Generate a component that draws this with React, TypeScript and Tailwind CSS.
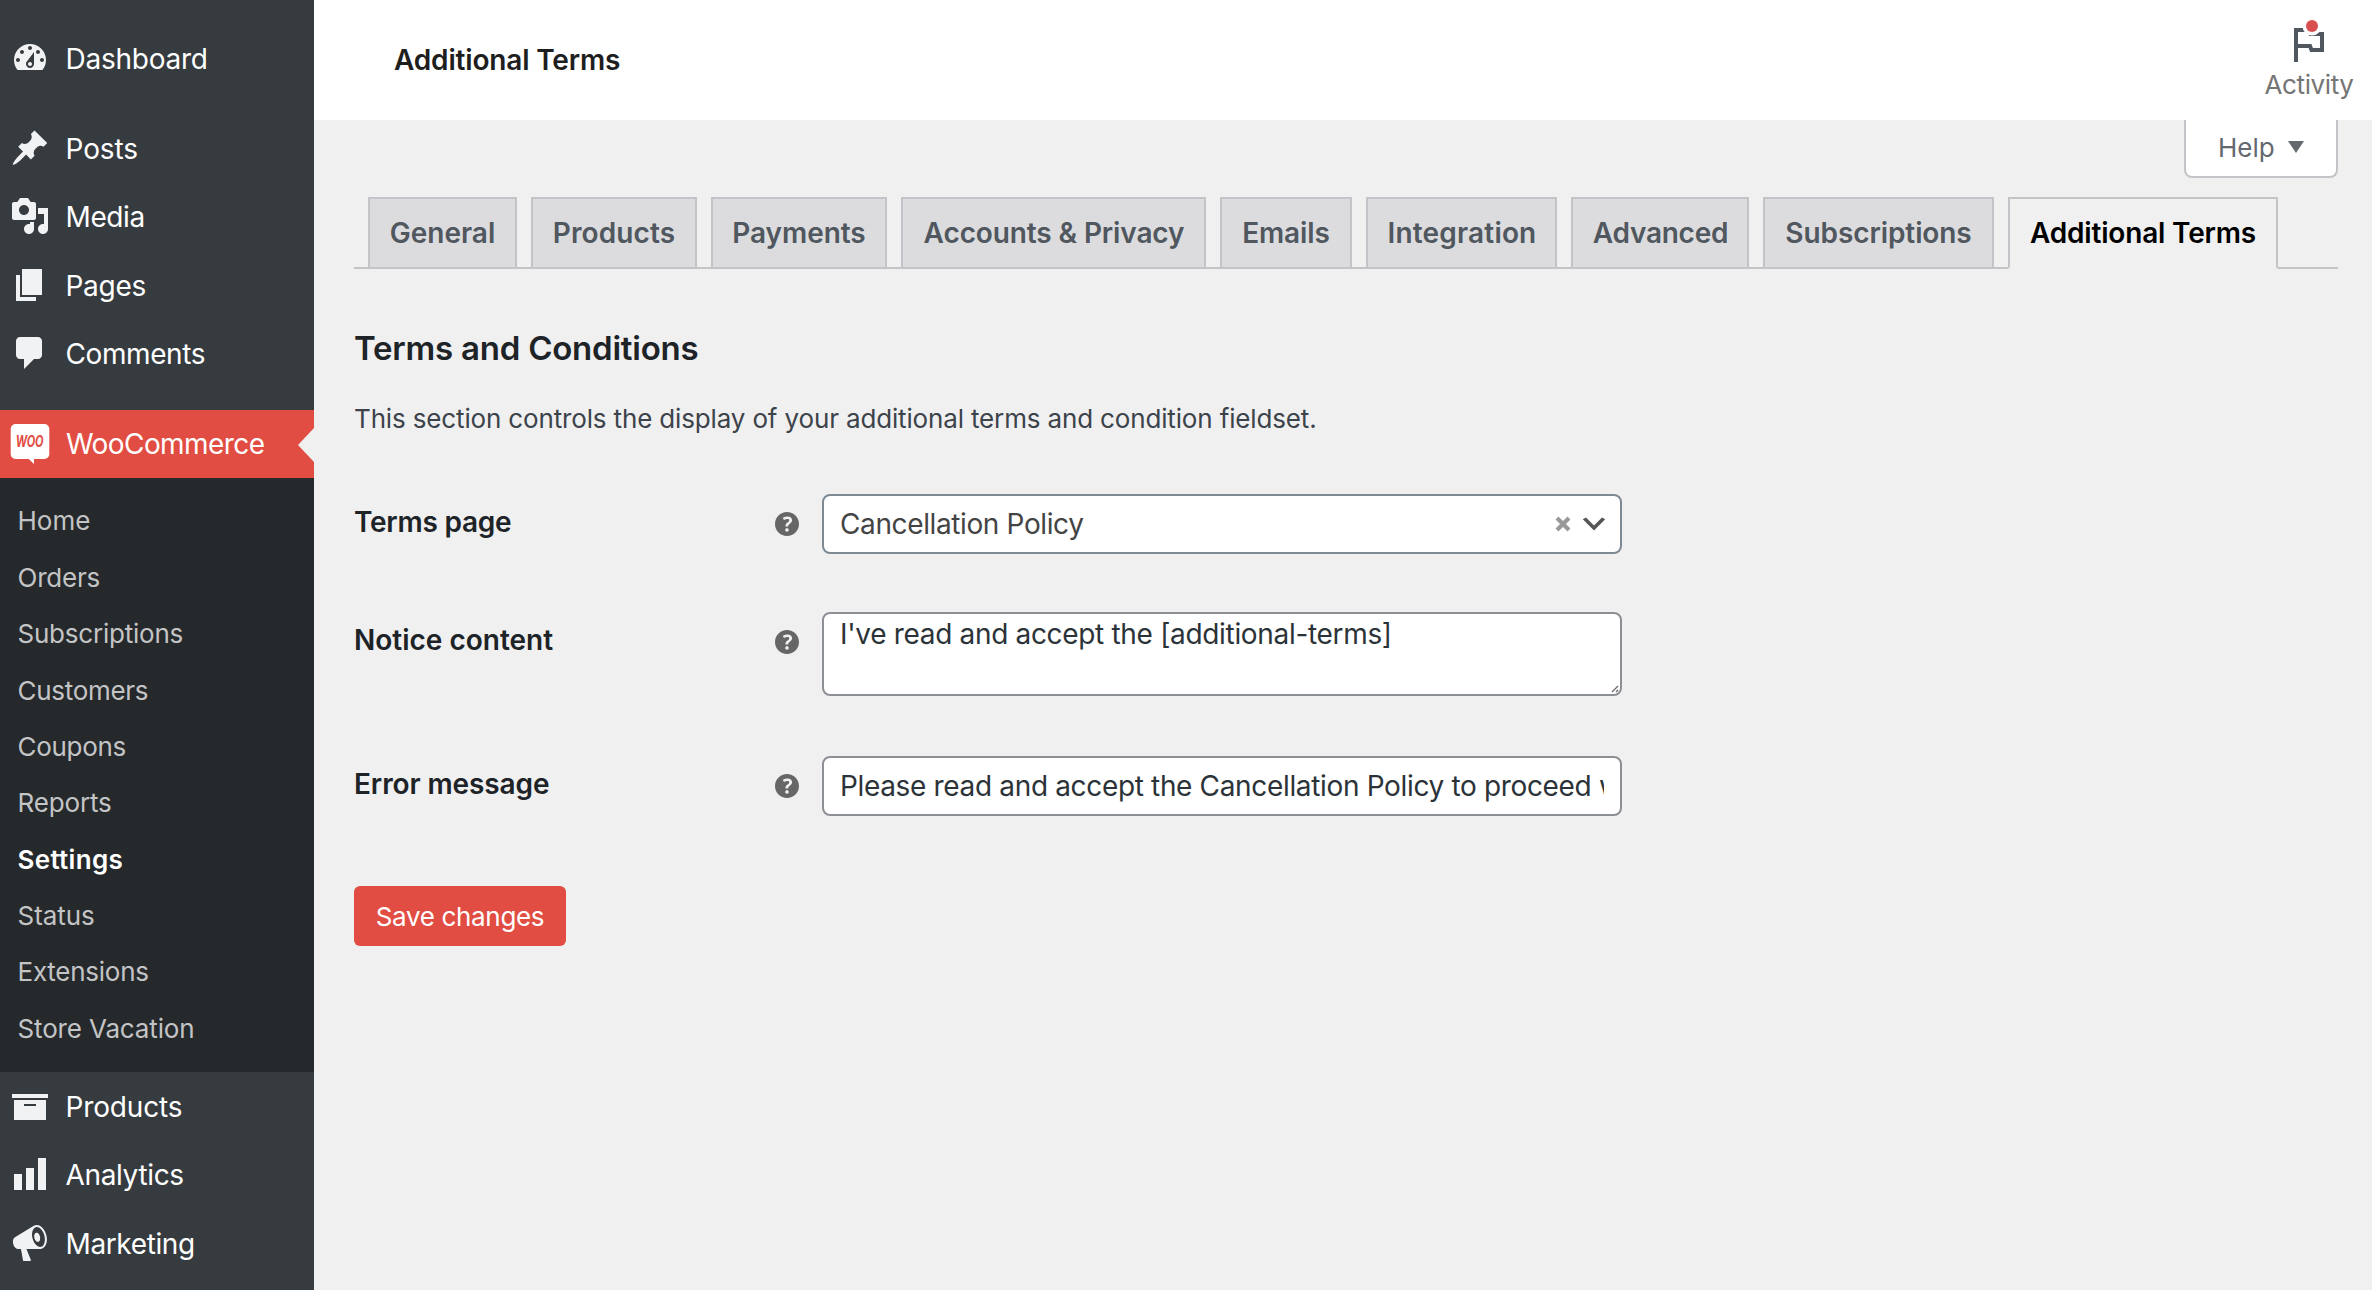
import type { ReactNode } from "react";

const icons: Record<string, string> = {
  dashboard:
    "M3.76 16h12.48c1.1-1.37 1.76-3.11 1.76-5 0-4.42-3.58-8-8-8s-8 3.58-8 8c0 1.89.66 3.63 1.76 5zM10 4c.55 0 1 .45 1 1s-.45 1-1 1-1-.45-1-1 .45-1 1-1zM6 6c.55 0 1 .45 1 1s-.45 1-1 1-1-.45-1-1 .45-1 1-1zm8 0c.55 0 1 .45 1 1s-.45 1-1 1-1-.45-1-1 .45-1 1-1zm-5.37 5.55L12 7v6c0 1.1-.9 2-2 2s-2-.9-2-2c0-.57.24-1.08.63-1.45zM4 10c.55 0 1 .45 1 1s-.45 1-1 1-1-.45-1-1 .45-1 1-1zm12 0c.55 0 1 .45 1 1s-.45 1-1 1-1-.45-1-1 .45-1 1-1zm-5 3c0-.55-.45-1-1-1s-1 .45-1 1 .45 1 1 1 1-.45 1-1z",
  posts:
    "M10.44 3.02l1.82-1.82 6.36 6.35-1.83 1.82c-1.05-.68-2.48-.57-3.41.36l-.75.75c-.92.93-1.04 2.35-.35 3.41l-1.83 1.82-2.41-2.41-2.8 2.79c-.42.42-3.38 2.71-3.8 2.29s1.86-3.39 2.28-3.81l2.79-2.79L4.1 9.36l1.83-1.82c1.05.69 2.48.57 3.4-.36l.75-.75c.93-.92 1.05-2.35.36-3.41z",
  media:
    "M13 11V4c0-.55-.45-1-1-1h-1.67L9 1H5L3.67 3H2c-.55 0-1 .45-1 1v7c0 .55.45 1 1 1h10c.55 0 1-.45 1-1zM7 4.5c1.38 0 2.5 1.12 2.5 2.5S8.38 9.5 7 9.5 4.5 8.38 4.5 7 5.62 4.5 7 4.5zM14 6h5v10.5c0 1.38-1.12 2.5-2.5 2.5S14 17.88 14 16.5s1.12-2.5 2.5-2.5c.17 0 .34.02.5.05V9h-3V6zm-4 8.05V13h2v3.5c0 1.38-1.12 2.5-2.5 2.5S7 17.88 7 16.5 8.12 14 9.5 14c.17 0 .34.02.5.05z",
  pages: "M6 15V2h10v13H6zm-1 1h8v2H3V5h2v11z",
  comments: "M5 2h9c1.1 0 2 .9 2 2v7c0 1.1-.9 2-2 2h-2l-5 5v-5H5c-1.1 0-2-.9-2-2V4c0-1.1.9-2 2-2z",
  products: "M19 4v2H1V4h18zM2 7h16v10H2V7zm11 3V9H7v1h6z",
  analytics: "M18 18V2h-4v16h4zm-6 0V7H8v11h4zm-6 0v-8H2v8h4z",
  marketing:
    "M18.15 5.94c.46 1.62.38 3.22-.02 4.48-.42 1.28-1.26 2.18-2.3 2.48-.16.06-.26.06-.4.06-.06.02-.12.02-.18.02-.06.02-.14.02-.22.02h-6.8l2.22 5.5c.02.14-.06.26-.14.34-.08.1-.24.16-.34.16H6.95c-.1 0-.26-.06-.34-.16-.08-.08-.16-.2-.14-.34l-1-5.5H4.25l-.02-.02c-.5.06-1.08-.18-1.54-.62s-.88-1.08-1.06-1.88c-.24-.8-.2-1.56-.02-2.2.18-.62.58-1.08 1.06-1.3l.02-.02 9-5.4c.1-.06.18-.1.24-.16.06-.04.14-.08.24-.12.16-.08.28-.12.5-.18 1.04-.3 2.24.1 3.22.98s1.84 2.24 2.26 3.86zm-2.58 5.98h-.02c.4-.1.74-.34 1.04-.7.58-.7.86-1.76.86-3.04 0-.64-.1-1.3-.28-1.98-.34-1.36-1.02-2.5-1.78-3.24s-1.68-1.1-2.46-.88c-.82.22-1.4.96-1.7 2-.32 1.04-.28 2.36.06 3.72.38 1.36 1 2.5 1.8 3.24.78.74 1.62 1.1 2.48.88zm-2.54-7.08c.22-.04.42-.02.62.04.38.16.76.48 1.02 1s.42 1.2.42 1.78c0 .3-.04.56-.12.8-.18.48-.44.84-.86.94-.34.1-.8-.06-1.14-.4s-.64-.86-.78-1.5c-.18-.62-.12-1.24.02-1.72s.48-.84.82-.94z",
};

function MenuItem({ icon, label, track }: { icon: string; label: string; track: string }) {
  return (
    <a className="flex h-[68.4px] shrink-0 items-start text-white">
      <svg viewBox="0 0 20 20" className="mx-2.5 mt-3.5 size-10 shrink-0 fill-[#f1f2f3]" fillRule="evenodd">
        <path d={icons[icon]} />
      </svg>
      <span className={`ml-[5.5px] text-[28px] leading-[70px] ${track}`}>{label}</span>
    </a>
  );
}

const submenu = [
  { label: "Home", track: "tracking-[0px]" },
  { label: "Orders", track: "tracking-[-0.22px]" },
  { label: "Subscriptions", track: "tracking-[-0.22px]" },
  { label: "Customers", track: "tracking-[-0.3px]" },
  { label: "Coupons", track: "tracking-[-0.3px]" },
  { label: "Reports", track: "tracking-[-0.15px]" },
  { label: "Settings", track: "tracking-[0.31px]" },
  { label: "Status", track: "tracking-[-0.05px]" },
  { label: "Extensions", track: "tracking-[-0.25px]" },
  { label: "Store Vacation", track: "tracking-[-0.15px]" },
];

function WooIcon() {
  return (
    <svg viewBox="0 0 40 42" className="ml-2.5 h-[42px] w-10 shrink-0 overflow-visible">
      <path
        fill="#fff"
        d="M5.5 1h29a4.800 4.800 0 0 1 4.800 4.800v25.400a4.800 4.800 0 0 1-4.800 4.800H24v5l-5.200-5H5.500A4.800 4.800 0 0 1 .7 31.200V5.800A4.800 4.800 0 0 1 5.500 1z"
      />
      <text
        transform="translate(5.800 23.800) scale(1 1.450)"
        fill="#e14d43"
        fontSize="11"
        className="font-['Inter'] font-bold italic tracking-[-0.2px]"
      >
        WOO
      </text>
    </svg>
  );
}

function Sidebar() {
  return (
    <aside className="flex w-[314px] shrink-0 flex-col overflow-hidden bg-[#363b3f] pt-6">
      <MenuItem icon="dashboard" label="Dashboard" track="tracking-[-0.25px]" />
      <div className="h-[21.6px] shrink-0" />
      <MenuItem icon="posts" label="Posts" track="tracking-[-0.1px]" />
      <MenuItem icon="media" label="Media" track="tracking-[-0.39px]" />
      <MenuItem icon="pages" label="Pages" track="tracking-[-0.3px]" />
      <MenuItem icon="comments" label="Comments" track="tracking-[-0.4px]" />
      <div className="h-[22.4px] shrink-0" />
      <a className="relative flex h-[68px] shrink-0 items-start bg-[#e14d43] text-white">
        <span className="mt-[13px] w-[60px] shrink-0"><WooIcon /></span>
        <span className="ml-1.5 text-[28px] leading-[69px] tracking-[-0.58px]">WooCommerce</span>
        <svg viewBox="0 0 16 34" className="absolute right-0 top-[18px] h-[34px] w-4 fill-[#f0f0f1]">
          <path d="M16 0v34L0 17z" />
        </svg>
      </a>
      <nav className="flex h-[594px] shrink-0 flex-col bg-[#26292c] pl-[17.5px] pt-[15.4px]">
        {submenu.map((s) => (
          <a
            key={s.label}
            className={`h-[56.4px] text-[26px] leading-[56.4px] ${s.track} ${
              s.label === "Settings" ? "font-semibold text-white" : "text-[#c3c4c5]"
            }`}
          >
            {s.label}
          </a>
        ))}
      </nav>
      <MenuItem icon="products" label="Products" track="tracking-[-0.15px]" />
      <MenuItem icon="analytics" label="Analytics" track="tracking-[-0.35px]" />
      <MenuItem icon="marketing" label="Marketing" track="tracking-[-0.38px]" />
    </aside>
  );
}

const tabs = [
  { label: "General", cls: "w-[149px]" },
  { label: "Products", cls: "w-[166px] tracking-[0.12px]" },
  { label: "Payments", cls: "w-[176px] tracking-[-0.06px]" },
  { label: "Accounts & Privacy", cls: "w-[305px] pl-px tracking-[-0.12px]" },
  { label: "Emails", cls: "w-[132px] tracking-[-0.1px]" },
  { label: "Integration", cls: "w-[191px] pl-px tracking-[0.18px]" },
  { label: "Advanced", cls: "w-[178px] pl-px tracking-[-0.25px]" },
  { label: "Subscriptions", cls: "w-[231px] tracking-[-0.09px]" },
  { label: "Additional Terms", cls: "w-[270px] tracking-[-0.17px]" },
];

function HelpTip() {
  return (
    <svg viewBox="3 3 14 14" className="size-6 fill-[#666]">
      <path d="M17 10c0-3.870-3.140-7-7-7-3.870 0-7 3.130-7 7s3.130 7 7 7c3.860 0 7-3.130 7-7zm-6.300 1.480H9.140v-.43c0-.38.08-.7.24-.98s.46-.57.88-.89c.41-.29.68-.53.81-.71.14-.18.2-.39.2-.62 0-.25-.09-.44-.28-.58-.19-.13-.45-.19-.79-.19-.58 0-1.250.19-2 .57l-.64-1.280c.87-.49 1.800-.74 2.770-.74.81 0 1.450.2 1.920.58.48.39.71.91.71 1.550 0 .43-.09.8-.29 1.110-.19.32-.57.67-1.110 1.060-.38.28-.61.49-.71.63-.1.15-.15.34-.15.57v.35zm-1.470 2.740c-.18-.17-.27-.42-.27-.73 0-.33.08-.58.26-.75s.43-.25.77-.25c.32 0 .57.09.75.26s.27.42.27.74c0 .3-.09.55-.27.72-.18.18-.43.27-.75.27-.33 0-.58-.09-.76-.26z" />
    </svg>
  );
}

function Field({ label, track, className, children }: { label: string; track: string; className: string; children: ReactNode }) {
  return (
    <div className={`flex items-start ${className}`}>
      <label className={`mt-2 w-[421px] text-[28px] font-semibold leading-10 text-[#1d2327] ${track}`}>{label}</label>
      <span className="mr-[23px] mt-[18px]"><HelpTip /></span>
      <div className="w-[800px]">{children}</div>
    </div>
  );
}

export default function App() {
  return (
    <div className="flex h-[1290px] w-full overflow-hidden bg-[#f0f0f1] font-['Inter',sans-serif]">
      <Sidebar />
      <div className="flex min-w-0 flex-1 flex-col">
        <header className="flex h-[120px] shrink-0 items-center justify-between bg-white pl-20 pr-[17px]">
          <h1 className="text-[28px] font-semibold leading-10 tracking-[-0.17px] text-[#1e1e1e]">Additional Terms</h1>
          <button className="flex h-[120px] w-[92px] flex-col items-center pt-5">
            <svg viewBox="0 0 36 44" className="h-11 w-9">
              <path
                d="M5 42V10h13l1.500 4H31v16H20.500l-1.500-4H5"
                fill="none"
                stroke="#50575e"
                strokeWidth="4"
              />
              <circle cx="21" cy="6" r="9.500" fill="#fff" />
              <circle cx="21" cy="6" r="6" fill="#d94f4f" />
            </svg>
            <span className="text-[26px] leading-[42px] tracking-[-0.4px] text-[#757575]">Activity</span>
          </button>
        </header>
        <div className="flex shrink-0 justify-end pr-[34px]">
          <button className="flex h-[58px] w-[154px] items-start rounded-b-lg border-2 border-t-0 border-[#c3c4c7] bg-white pl-8 text-[#646970]">
            <span className="text-[26px] leading-[56px]">Help</span>
            <svg viewBox="0 0 16 12" className="ml-[13px] mt-[21px] h-3 w-4 fill-[#646970]">
              <path d="M0 0h16L8 12z" />
            </svg>
          </button>
        </div>
        <main className="pl-10 pr-[34px] pt-[19px]">
          <nav className="flex h-[72px] gap-3.5 border-b-2 border-[#c3c4c7] pl-3.5">
            {tabs.map((t) => (
              <a
                key={t.label}
                className={`h-[72px] shrink-0 whitespace-nowrap border-2 border-[#c3c4c7] text-center text-[28px] font-semibold leading-[68px] ${t.cls} ${
                  t.label === "Additional Terms"
                    ? "border-b-[#f0f0f1] bg-[#f0f0f1] text-black"
                    : "bg-[#dcdcde] text-[#50575e]"
                }`}
              >
                {t.label}
              </a>
            ))}
          </nav>
          <h2 className="mt-[59px] text-[33px] font-semibold leading-10 tracking-[-0.22px] text-[#1d2327]">
            Terms and Conditions
          </h2>
          <p className="mt-[31px] text-[26px] leading-10 tracking-[-0.15px] text-[#3c434a]">
            This section controls the display of your additional terms and condition fieldset.
          </p>
          <Field label="Terms page" track="tracking-[-0.25px]" className="mt-[55px] h-[118px]">
            <div className="flex h-[60px] items-center rounded-lg border-2 border-[#7e8993] bg-white pl-4 pr-[10px]">
              <span className="flex-1 text-[28px] tracking-[-0.38px] text-[#444]">Cancellation Policy</span>
              <svg viewBox="0 0 16 16" className="mr-[7px] size-4">
                <path d="M2 2l12 12M14 2L2 14" stroke="#999" strokeWidth="4.200" />
              </svg>
              <svg viewBox="0 0 20 20" className="size-8 fill-[#555]">
                <path d="M5 6l5 5 5-5 2 1-7 7-7-7 2-1z" />
              </svg>
            </div>
          </Field>
          <Field label="Notice content" track="" className="h-[144px]">
            <div className="relative h-[84px]">
              <textarea
                className="block h-[84px] w-full resize-none overflow-hidden rounded-lg border-2 border-[#8c8f94] bg-white px-4 pt-0.5 text-[28px] leading-9 tracking-[-0.32px] text-[#2c3338]"
                defaultValue="I've read and accept the [additional-terms]"
              />
              <svg viewBox="0 0 8 8" className="absolute bottom-[3px] right-[3px] size-2">
                <path d="M1 7l6-6M5 7l2-2" stroke="#666" strokeWidth="1.200" />
              </svg>
            </div>
          </Field>
          <Field label="Error message" track="tracking-[-0.1px]" className="h-[130px]">
            <input
              className="block h-[60px] w-full rounded-lg border-2 border-[#8c8f94] bg-white px-4 text-[28px] tracking-[-0.34px] text-[#2c3338]"
              defaultValue="Please read and accept the Cancellation Policy to proceed with your order."
            />
          </Field>
          <button className="h-[60px] w-[212px] rounded-md bg-[#e14d43] text-[26px] tracking-[-0.34px] text-white">
            Save changes
          </button>
        </main>
      </div>
    </div>
  );
}
